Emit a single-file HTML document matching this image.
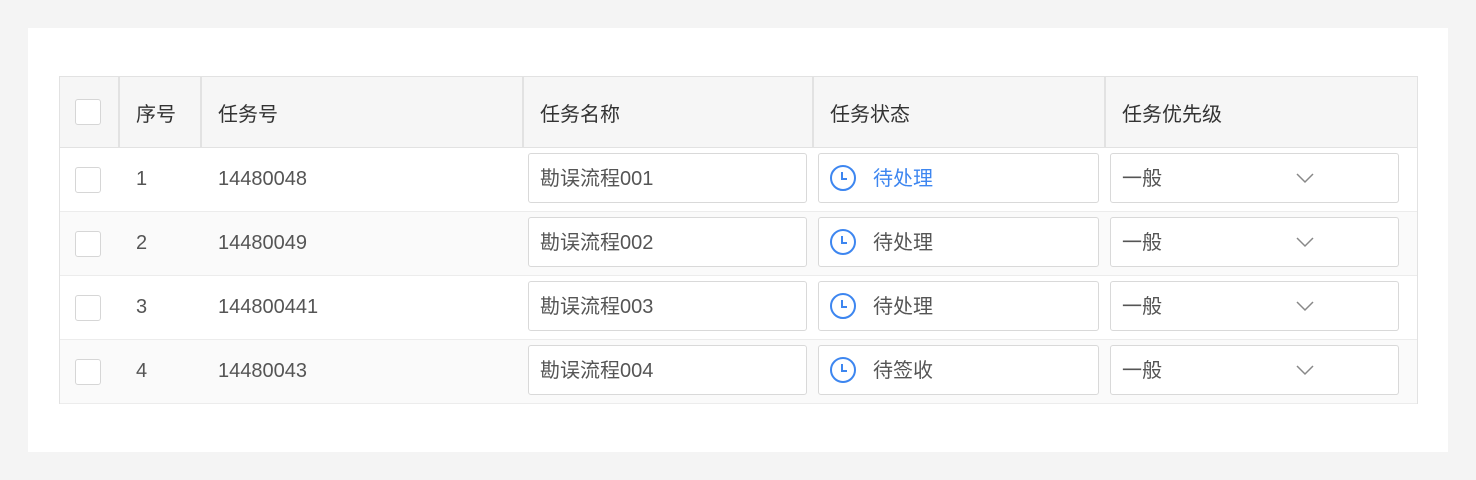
<!DOCTYPE html>
<html><head><meta charset="utf-8"><style>
*{box-sizing:border-box;margin:0;padding:0}
body{width:1476px;height:480px;background:#f4f4f4;font-family:"Liberation Sans","Noto Sans CJK SC",sans-serif;position:relative;overflow:hidden}
.card{position:absolute;left:28px;top:28px;width:1420px;height:424px;background:#fff}
.tbl{position:absolute;left:59px;top:76px;width:1359px;height:328px;border:1px solid #e2e2e2}
.hd{position:absolute;left:0;top:0;width:100%;height:71px;background:#f6f6f6;border-bottom:1px solid #e2e2e2}
.row{position:absolute;left:0;width:100%;height:64px;border-bottom:1px solid #ececec}
.c{position:absolute;top:0;height:100%;display:flex;align-items:center;font-size:20px;color:#555}
.hd .c{color:#333;border-right:2px solid #e2e2e2}
.cb{width:26px;height:26px;border:1.5px solid #d6d6d6;border-radius:3px;background:#fff;margin-left:15px}
.inp{position:absolute;top:5px;height:50px;border:1.5px solid #d9d9d9;border-radius:3px;display:flex;align-items:center;font-size:20px;color:#555;padding-left:11px;padding-bottom:3px;background:#fff}
</style></head><body>
<div class="card"></div>
<div class="tbl">
<div class="hd">
<div class="c" style="left:0;width:60px"><div class="cb"></div></div>
<div class="c" style="left:60px;width:82px;padding-left:16px">序号</div>
<div class="c" style="left:142px;width:322px;padding-left:16px">任务号</div>
<div class="c" style="left:464px;width:290px;padding-left:16px">任务名称</div>
<div class="c" style="left:754px;width:292px;padding-left:16px">任务状态</div>
<div class="c" style="left:1046px;width:313px;padding-left:16px;border-right:none">任务优先级</div>
</div>
<script>
const d=[["1","14480048","勘误流程001","待处理",1],["2","14480049","勘误流程002","待处理",0],["3","144800441","勘误流程003","待处理",0],["4","14480043","勘误流程004","待签收",0]];
let h="";
d.forEach((r,i)=>{const col=r[4]?"#3d86f0":"#555";
h+=`<div class="row" style="top:${71+i*64}px;background:${i%2?'#fafafa':'#fff'}">
<div class="c" style="left:0;width:60px"><div class="cb"></div></div>
<div class="c" style="left:76px">${r[0]}</div>
<div class="c" style="left:158px">${r[1]}</div>
<div class="inp" style="left:468px;width:279px">${r[2]}</div>
<div class="inp" style="left:758px;width:281px;color:${col};padding-left:10px"><svg width="28" height="28" viewBox="0 0 28 28" style="margin-right:16px;margin-top:3px"><circle cx="14" cy="14" r="12" fill="none" stroke="#3d86f0" stroke-width="2"/><path d="M13 8v7h5" fill="none" stroke="#3d86f0" stroke-width="2"/></svg>${r[3]}</div>
<div class="inp" style="left:1050px;width:289px">一般<svg width="20" height="12" viewBox="0 0 20 12" style="position:absolute;left:184px;top:18px"><path d="M2 2l8 8 8-8" fill="none" stroke="#888" stroke-width="1.5"/></svg></div>
</div>`});
document.write(h);
</script>
</div>
</body></html>
